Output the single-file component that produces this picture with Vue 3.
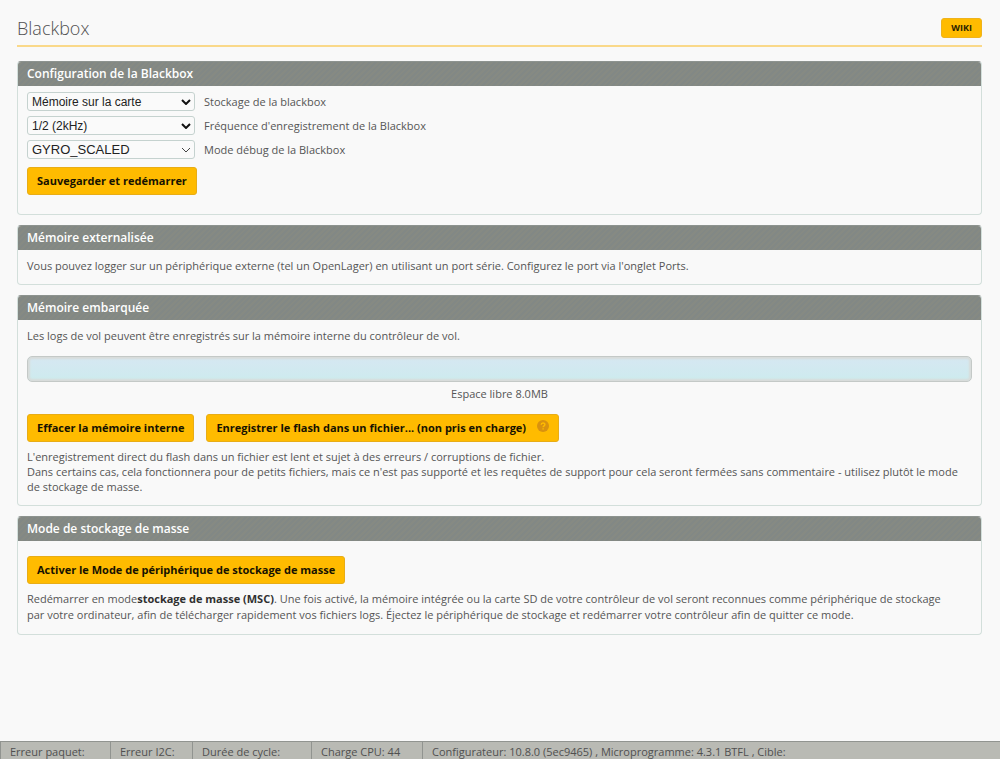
<script setup>
import { ref } from 'vue'

const settings = ref([
  { id: 'device', label: 'Stockage de la blackbox', value: 'Mémoire sur la carte' },
  { id: 'rate', label: "Fréquence d'enregistrement de la Blackbox", value: '1/2 (2kHz)' },
  { id: 'debug', label: 'Mode débug de la Blackbox', value: 'GYRO_SCALED', thin: true },
])

const status = [
  { id: 'packet', text: 'Erreur paquet:' },
  { id: 'i2c', text: 'Erreur I2C:' },
  { id: 'cycle', text: 'Durée de cycle:' },
  { id: 'cpu', text: 'Charge CPU: 44' },
  { id: 'version', text: 'Configurateur: 10.8.0 (5ec9465) , Microprogramme: 4.3.1 BTFL , Cible:' },
]
</script>

<template>
  <div class="page">
    <main class="content">
      <header class="title">
        <h1>Blackbox</h1>
        <a class="wiki" href="#">WIKI</a>
      </header>

      <section class="panel">
        <h2>Configuration de la Blackbox</h2>
        <div class="body config">
          <div v-for="s in settings" :key="s.id" class="row" :class="{ thin: s.thin }">
            <div class="pick">
              <select :id="s.id" v-model="s.value">
                <option>{{ s.value }}</option>
              </select>
              <svg class="chevron" viewBox="0 0 10 6" aria-hidden="true"><path d="M1 1l4 4 4-4" /></svg>
            </div>
            <label :for="s.id">{{ s.label }}</label>
          </div>
          <button class="btn save" type="button">Sauvegarder et redémarrer</button>
        </div>
      </section>

      <section class="panel">
        <h2>Mémoire externalisée</h2>
        <div class="body">
          <p>Vous pouvez logger sur un périphérique externe (tel un OpenLager) en utilisant un port série. Configurez le port via l'onglet Ports.</p>
        </div>
      </section>

      <section class="panel">
        <h2>Mémoire embarquée</h2>
        <div class="body">
          <p>Les logs de vol peuvent être enregistrés sur la mémoire interne du contrôleur de vol.</p>
          <div class="gauge"></div>
          <p class="free">Espace libre 8.0MB</p>
          <div class="actions">
            <button class="btn" type="button">Effacer la mémoire interne</button>
            <button class="btn" type="button">
              Enregistrer le flash dans un fichier... (non pris en charge)
              <svg class="help" viewBox="0 0 12 12" aria-hidden="true">
                <circle cx="6" cy="6" r="6" />
                <path d="M4.2 4.7C4.2 2.4 7.9 2.4 7.9 4.6C7.9 5.8 6.1 5.9 6.1 7.3M6.1 8.3V9.6" />
              </svg>
            </button>
          </div>
          <p>
            L'enregistrement direct du flash dans un fichier est lent et sujet à des erreurs / corruptions de fichier.<br>
            Dans certains cas, cela fonctionnera pour de petits fichiers, mais ce n'est pas supporté et les requêtes de support pour cela seront fermées sans commentaire - utilisez plutôt le mode de stockage de masse.
          </p>
        </div>
      </section>

      <section class="panel">
        <h2>Mode de stockage de masse</h2>
        <div class="body mass">
          <button class="btn" type="button">Activer le Mode de périphérique de stockage de masse</button>
          <p>Redémarrer en mode<strong>stockage de masse (MSC)</strong>. Une fois activé, la mémoire intégrée ou la carte SD de votre contrôleur de vol seront reconnues comme périphérique de stockage par votre ordinateur, afin de télécharger rapidement vos fichiers logs. Éjectez le périphérique de stockage et redémarrer votre contrôleur afin de quitter ce mode.</p>
        </div>
      </section>
    </main>

    <footer class="status">
      <span v-for="s in status" :key="s.id" :class="s.id">{{ s.text }}</span>
    </footer>
  </div>
</template>

<style>
body {
  margin: 0;
  background: #f9f9f9;
}
</style>

<style scoped>
.page {
  display: flex;
  flex-direction: column;
  min-height: 100vh;
  font: 11px/15px "Open Sans", "Noto Sans", sans-serif;
  color: #555;
}
.page * {
  box-sizing: border-box;
}
.content {
  flex: 1;
  display: flex;
  flex-direction: column;
  gap: 10px;
  padding: 13px 18px 20px 17px;
}
.title {
  display: flex;
  justify-content: space-between;
  align-items: center;
  height: 34px;
  margin-bottom: 4px;
  padding-bottom: 2px;
  border-bottom: 2px solid #fad98a;
}
h1 {
  margin: 0;
  font-size: 18px;
  line-height: 24px;
  font-weight: 300;
  color: #505050;
}
.wiki {
  padding: 0 9px;
  border: 1px solid #efb31c;
  border-radius: 3px;
  background: #ffbb00;
  font-size: 9px;
  line-height: 18px;
  font-weight: 700;
  color: #2b2200;
  text-decoration: none;
}
.panel {
  border: 1px solid #d3dfdb;
  border-top-color: #8d938f;
  border-radius: 4px;
  overflow: hidden;
}
h2 {
  margin: 0;
  padding: 3px 9px;
  background: repeating-linear-gradient(135deg, #828885 0 2px, #868a83 2px 4px);
  font-size: 12px;
  line-height: 18px;
  font-weight: 600;
  color: #fff;
}
.body {
  padding: 8px 9px 11px;
}
p {
  margin: 0;
}
.config {
  display: flex;
  flex-direction: column;
  align-items: flex-start;
  gap: 5px;
  padding: 6px 9px 19px;
}
.row {
  display: flex;
  align-items: center;
  gap: 9px;
}
.pick {
  position: relative;
  width: 168px;
}
select {
  display: block;
  width: 100%;
  height: 19px;
  padding: 0 20px 0 4px;
  border: 1px solid #c5d2cf;
  border-radius: 3px;
  background: #fafafa;
  appearance: none;
  font: 12px/16px "Liberation Sans", Arial, sans-serif;
  color: #222;
}
.chevron {
  position: absolute;
  right: 4px;
  top: 50%;
  width: 10px;
  height: 6px;
  margin-top: -3px;
  fill: none;
  stroke: #111;
  stroke-width: 2;
  pointer-events: none;
}
.thin select {
  font-size: 13px;
}
.thin .chevron {
  stroke: #444;
  stroke-width: 1;
}
.btn {
  height: 28px;
  padding: 0 9px;
  border: 1px solid #e8ad16;
  border-radius: 3px;
  background: #ffbb00;
  font: 700 11px/16px "Open Sans", "Noto Sans", sans-serif;
  color: #161200;
  white-space: nowrap;
}
.save {
  margin-top: 3px;
}
.gauge {
  height: 26px;
  margin: 13px 0 4px;
  border: 1px solid #c4c9c7;
  border-radius: 5px;
  background: linear-gradient(#d6e7f2, #cdebee);
  box-shadow: inset 0 0 2px 2px #d8dcda;
}
.free {
  text-align: center;
}
.actions {
  display: flex;
  gap: 12px;
  margin: 13px 0 7px;
}
.help {
  width: 12px;
  height: 12px;
  vertical-align: 0;
}
.actions .help {
  margin-left: 8px;
}
.help circle {
  fill: #d9920f;
}
.help path {
  fill: none;
  stroke: #ffbb00;
  stroke-width: 1.4;
}
.mass {
  padding-top: 15px;
}
.mass p {
  margin-top: 7px;
  padding-right: 16px;
  line-height: 16px;
}
strong {
  color: #303030;
}
.status {
  display: flex;
  height: 18px;
  overflow: hidden;
  border-top: 1px solid #919490;
  background: #b9bab4;
  line-height: 20px;
  white-space: nowrap;
  color: #505050;
}
.status span {
  padding: 0 9px;
  border-left: 1px solid #919490;
}
.packet {
  width: 110px;
}
.i2c {
  width: 82px;
}
.cycle {
  width: 119px;
}
.cpu {
  width: 111px;
}
</style>
